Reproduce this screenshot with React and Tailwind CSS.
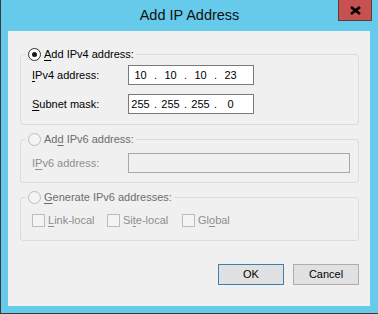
const font = { fontFamily: '"Liberation Sans", Arial, sans-serif' };

const Radio = ({ checked, disabled }) => (
    <span
        className={`inline-flex items-center justify-center w-[13px] h-[13px] rounded-full border ${
            disabled ? "border-[#bcbcbc] bg-[#f4f4f4]" : "border-[#333333] bg-white"
        }`}
    >
        {checked && <span className="w-[5px] h-[5px] rounded-full bg-[#1a1a1a]" />}
    </span>
);

const Check = ({ label, u, after }) => (
    <div className="flex items-center gap-[3px]">
        <span className="w-[13px] h-[13px] border border-[#bcbcbc] bg-[#f4f4f4]" />
        <span className="text-[#8d8d8d] leading-[13px]">
            {label}
            <span className="underline underline-offset-2">{u}</span>
            {after}
        </span>
    </div>
);

const Group = ({ legend, checked, disabled, className, children }) => (
    <fieldset className={`border border-[#dcdcdc] rounded-[3px] ${className}`}>
        <legend className="ml-[5px] px-[2px] flex items-center gap-[3px] h-[14px]">
            <Radio checked={checked} disabled={disabled} />
            <span className={disabled ? "text-[#6d6d6d]" : "text-black"}>{legend}</span>
        </legend>
        {children}
    </fieldset>
);

const IpField = ({ parts }) => (
    <div className="w-[126px] h-[20px] border border-[#7a7a7a] bg-white flex items-center text-black">
        {parts.map((p, i) => (
            <div key={i} className="flex items-center">
                <span className="w-[23px] text-center">{p}</span>
                {i < 3 && <span className="w-[7px] text-center">.</span>}
            </div>
        ))}
    </div>
);

export default function App() {
    return (
        <div
            className="w-[378px] h-[314px] bg-[#66cbea] border-l border-b border-[#3a3a3a] flex flex-col text-[11px]"
            style={font}
        >
            <div className="relative h-[31px] flex items-center justify-center">
                <span className="text-[14.5px] text-[#111] pt-[1px]">Add IP Address</span>
                <div className="absolute left-[337px] top-0 w-[34px] h-[21px] bg-[#c75050] border-x border-b border-[#5e3b3b] flex items-center justify-center">
                    <svg width="11" height="9" viewBox="0 0 11 9">
                        <path d="M1 1 L10 8 M10 1 L1 8" stroke="#000" strokeWidth="2.6" strokeLinecap="butt" />
                    </svg>
                </div>
            </div>

            <div className="ml-[7px] w-[362px] h-[275px] bg-[#f0f0f0] flex flex-col pt-[16px] pl-[12px] pr-[11px]">
                <Group
                    checked
                    legend={
                        <>
                            <span className="underline underline-offset-2">A</span>dd IPv4 address:
                        </>
                    }
                    className="h-[78px]"
                >
                    <div className="flex flex-col gap-[9px] pt-[4px] pl-[11px]">
                        <div className="flex items-center">
                            <span className="w-[96px]">
                                <span className="underline underline-offset-2">I</span>Pv4 address:
                            </span>
                            <IpField parts={["10", "10", "10", "23"]} />
                        </div>
                        <div className="flex items-center">
                            <span className="w-[96px]">
                                <span className="underline underline-offset-2">S</span>ubnet mask:
                            </span>
                            <IpField parts={["255", "255", "255", "0"]} />
                        </div>
                    </div>
                </Group>

                <Group
                    disabled
                    legend={
                        <>
                            Ad<span className="underline underline-offset-2">d</span> IPv6 address:
                        </>
                    }
                    className="mt-[7px] h-[51px]"
                >
                    <div className="flex items-center pt-[7px] pl-[11px]">
                        <span className="w-[96px] text-[#8d8d8d]">
                            I<span className="underline underline-offset-2">P</span>v6 address:
                        </span>
                        <div className="w-[222px] h-[20px] border border-[#a8a8a8] bg-[#f0f0f0]" />
                    </div>
                </Group>

                <Group
                    disabled
                    legend={
                        <>
                            <span className="underline underline-offset-2">G</span>enerate IPv6 addresses:
                        </>
                    }
                    className="mt-[7px] h-[51px]"
                >
                    <div className="flex items-center pt-[10px] pl-[11px]">
                        <div className="w-[75px]">
                            <Check label="" u="L" after="ink-local" />
                        </div>
                        <div className="w-[75px]">
                            <Check label="Si" u="t" after="e-local" />
                        </div>
                        <Check label="Gl" u="o" after="bal" />
                    </div>
                </Group>

                <div className="flex justify-end gap-[9px] mt-[23px]">
                    <button className="w-[66px] h-[21px] border border-[#3c7fb1] bg-[#e1e1e1] text-black">
                        OK
                    </button>
                    <button className="w-[66px] h-[21px] border border-[#adadad] bg-[#e1e1e1] text-black">
                        Cancel
                    </button>
                </div>
            </div>
        </div>
    );
}
